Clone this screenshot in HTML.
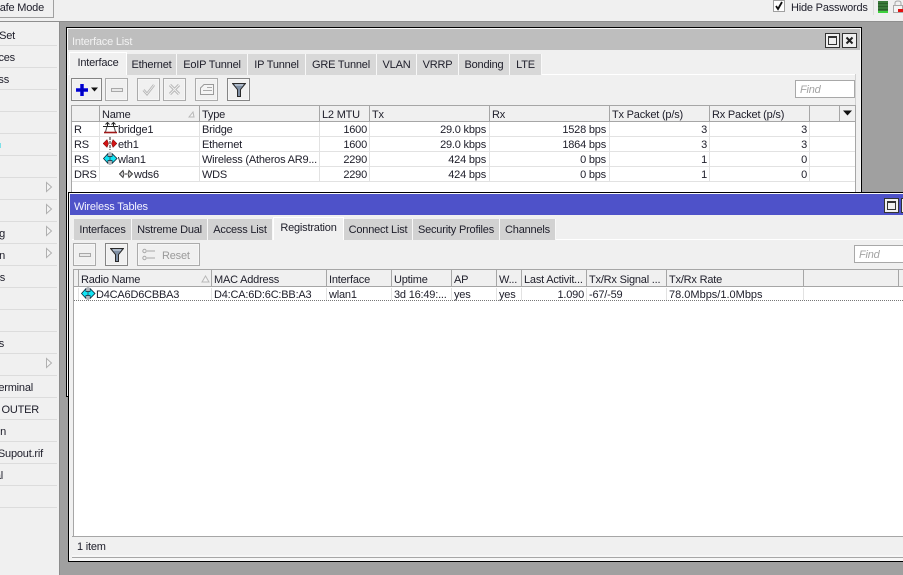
<!DOCTYPE html>
<html><head><meta charset="utf-8"><title>Interface List</title>
<style>
html,body{margin:0;padding:0}
body{width:903px;height:575px;overflow:hidden;position:relative;background:#a0a0a0;font:11px "Liberation Sans",Arial,sans-serif;letter-spacing:-.2px;color:#20202c}
div,svg{position:absolute;box-sizing:border-box}
.t{white-space:nowrap;line-height:16px;height:14px}
.r{text-align:right}
.sep{left:0;width:57px;height:1px;background:#dcdcdc}
.tab{background:#d8d8d8;border-right:1px solid #f8f8f8;height:21px;line-height:22px;text-align:center;white-space:nowrap}
.act{background:#f0f0f0;border:1px solid #fff;border-bottom:0;line-height:21px;text-align:center;white-space:nowrap;height:23px;z-index:2}
.btn{width:23px;height:23px;border:1px solid #ababab;background:#f0f0f0;box-shadow:inset 0 0 0 1px #f6f6f6}
.dark{border-color:#858585}
.hc{top:0;height:100%;width:1px;background:#a6a6a6}
.rc{width:1px;background:#e2e2e2}
.rl{height:1px;background:#e2e2e2}
</style></head><body>

<!-- top bar -->
<div style="left:0;top:0;width:903px;height:22px;background:#f0f0f0;border-bottom:1px solid #8e8e8e"></div>
<div style="left:-10px;top:-3px;width:64px;height:21px;border:1px solid #a0a0a0;background:#f0f0f0"></div>
<div class="t" style="right:859px;top:0">Safe Mode</div>
<div style="left:773px;top:0;width:12px;height:12px;background:#fff;border:1px solid #a0a0a0"></div>
<svg style="left:773px;top:0" width="12" height="12"><path d="M3 6l2 3 4-7" fill="none" stroke="#111" stroke-width="1.8"/></svg>
<div class="t" style="left:791px;top:0">Hide Passwords</div>
<div style="left:873px;top:0;width:1px;height:15px;background:#dcdcdc"></div>
<div style="left:878px;top:1px;width:10px;height:10px;background:repeating-linear-gradient(#3a7a3a 0 2px,#2a602a 2px 3px)"></div>
<div style="left:878px;top:11px;width:10px;height:2px;background:#3fd23f"></div>
<svg style="left:893px;top:0" width="10" height="14"><path d="M2 6V3Q2 1 5 1T8 3V6" fill="none" stroke="#a8a8a8"/><rect x=".5" y="5.5" width="9" height="7" fill="#f4f4f4" stroke="#a8a8a8"/><rect x="5" y="9" width="5" height="3" fill="#e01010"/></svg>

<!-- sidebar -->
<div style="left:0;top:22px;width:60px;height:553px;background:#f0f0f0;border-right:1px solid #8c8c8c"></div>
<div class="sep" style="top:45px"></div><div class="sep" style="top:67px"></div><div class="sep" style="top:89px"></div><div class="sep" style="top:111px"></div><div class="sep" style="top:133px"></div><div class="sep" style="top:155px"></div><div class="sep" style="top:177px"></div><div class="sep" style="top:199px"></div><div class="sep" style="top:221px"></div><div class="sep" style="top:243px"></div><div class="sep" style="top:265px"></div><div class="sep" style="top:287px"></div><div class="sep" style="top:309px"></div><div class="sep" style="top:331px"></div><div class="sep" style="top:353px"></div><div class="sep" style="top:375px"></div><div class="sep" style="top:397px"></div><div class="sep" style="top:419px"></div><div class="sep" style="top:441px"></div><div class="sep" style="top:463px"></div><div class="sep" style="top:485px"></div><div class="sep" style="top:507px"></div>
<div class="t r" style="right:888px;top:28px">Set</div>
<div class="t r" style="right:888px;top:50px">ces</div>
<div class="t r" style="right:894px;top:72px">ss</div>
<div class="t r" style="right:898px;top:226px">g</div>
<div class="t r" style="right:898px;top:248px">n</div>
<div class="t r" style="right:898px;top:270px">s</div>
<div class="t r" style="right:899px;top:336px">s</div>
<div class="t r" style="right:870px;top:380px">erminal</div>
<div class="t r" style="right:864px;top:402px">OUTER</div>
<div class="t r" style="right:897px;top:424px">n</div>
<div class="t r" style="right:860px;top:446px">Supout.rif</div>
<div class="t r" style="right:900px;top:468px">al</div>
<div style="left:0;top:143px;width:1px;height:5px;background:#7fe0e8"></div>
<svg style="left:45px;top:181px" width="8" height="12"><path d="M1.500 1.500V10.500L6.500 6Z" fill="#f4f4f4" stroke="#b0b0b0"/></svg>
<svg style="left:45px;top:203px" width="8" height="12"><path d="M1.500 1.500V10.500L6.500 6Z" fill="#f4f4f4" stroke="#b0b0b0"/></svg>
<svg style="left:45px;top:225px" width="8" height="12"><path d="M1.500 1.500V10.500L6.500 6Z" fill="#f4f4f4" stroke="#b0b0b0"/></svg>
<svg style="left:45px;top:247px" width="8" height="12"><path d="M1.500 1.500V10.500L6.500 6Z" fill="#f4f4f4" stroke="#b0b0b0"/></svg>
<svg style="left:45px;top:357px" width="8" height="12"><path d="M1.500 1.500V10.500L6.500 6Z" fill="#f4f4f4" stroke="#b0b0b0"/></svg>

<!-- Interface List window -->
<div style="left:66px;top:27px;width:796px;height:370px;background:#f0f0f0;border:1px solid #000;box-shadow:inset 0 0 0 1px #f8f8f8"></div>
<div style="left:68px;top:29px;width:792px;height:21px;background:#bebebe"></div>
<div class="t" style="left:72px;top:34px;color:#f2f2f2">Interface List</div>
<div style="left:825px;top:33px;width:15px;height:15px;background:#f0f0f0;border:1px solid #333"></div>
<div style="left:828px;top:36px;width:9px;height:9px;border:1px solid #333;border-top-width:2px"></div>
<div style="left:842px;top:33px;width:15px;height:15px;background:#f0f0f0;border:1px solid #333"></div>
<svg style="left:842px;top:33px" width="15" height="15"><path d="M4.500 4.500l6 6m0-6l-6 6" stroke="#222" stroke-width="2"/></svg>

<div style="left:68px;top:74px;width:788px;height:1px;background:#fff"></div>
<div style="left:855px;top:74px;width:1px;height:120px;background:#d0d0d0"></div>
<div class="act" style="left:69px;top:52px;width:58px">Interface</div>
<div class="tab" style="left:127px;top:54px;width:50px">Ethernet</div>
<div class="tab" style="left:177px;top:54px;width:71px">EoIP Tunnel</div>
<div class="tab" style="left:248px;top:54px;width:58px">IP Tunnel</div>
<div class="tab" style="left:306px;top:54px;width:71px">GRE Tunnel</div>
<div class="tab" style="left:377px;top:54px;width:40px">VLAN</div>
<div class="tab" style="left:417px;top:54px;width:42px">VRRP</div>
<div class="tab" style="left:459px;top:54px;width:51px">Bonding</div>
<div class="tab" style="left:510px;top:54px;width:32px">LTE</div>

<div class="btn dark" style="left:71px;top:78px;width:31px"></div>
<svg style="left:76px;top:83px" width="24" height="14"><path d="M6 1v12M0 7h12" stroke="#0000e0" stroke-width="3.500"/><path d="M1 7h10M6 2v10" stroke="#0000c0" stroke-width="2"/><path d="M15 4.500h7l-3.500 4z" fill="#111"/></svg>
<div class="btn" style="left:105px;top:78px"></div>
<div style="left:111px;top:88px;width:12px;height:4px;background:#e8e8e8;border:1px solid #a8a8a8"></div>
<div class="btn" style="left:137px;top:78px"></div>
<svg style="left:142px;top:83px" width="14" height="13"><path d="M1.500 7l3.500 4 7-9" fill="none" stroke="#b4b4b4" stroke-width="2.500"/><path d="M1.500 7l3.500 4 7-9" fill="none" stroke="#f0f0f0" stroke-width=".8"/></svg>
<div class="btn" style="left:163px;top:78px"></div>
<svg style="left:168px;top:83px" width="13" height="13"><path d="M2 2l9 9m0-9l-9 9" stroke="#b4b4b4" stroke-width="3"/><path d="M2 2l9 9m0-9l-9 9" stroke="#f0f0f0" stroke-width="1"/></svg>
<div class="btn" style="left:195px;top:78px"></div>
<svg style="left:200px;top:84px" width="14" height="11"><path d="M.5 10.500V4L4 .5H13.500V10.500Z" fill="#f4f4f4" stroke="#9a9a9a"/><path d="M7 3.500h5M3 6.500h9" stroke="#aaa"/></svg>
<div class="btn dark" style="left:227px;top:78px"></div>
<svg style="left:232px;top:83px" width="14" height="14"><path d="M.5 .5H13.500L8.500 6.500V13.500H5.500V6.500Z" fill="#7f8fa4" stroke="#2a2a2a"/><path d="M3 2h8" stroke="#d8e0ea"/></svg>
<div style="left:795px;top:80px;width:60px;height:18px;background:#fff;border:1px solid #a8a8a8"></div>
<div class="t" style="left:800px;top:82px;font-style:italic;color:#a4a4a4">Find</div>

<!-- table 1 -->
<div style="left:71px;top:105px;width:785px;height:17px;background:#f0f0f0;border:1px solid #a6a6a6">
<div class="hc" style="left:27px"></div><div class="hc" style="left:127px"></div><div class="hc" style="left:247px"></div><div class="hc" style="left:297px"></div><div class="hc" style="left:417px"></div><div class="hc" style="left:537px"></div><div class="hc" style="left:637px"></div><div class="hc" style="left:737px"></div><div class="hc" style="left:767px"></div>
</div>
<div style="left:71px;top:122px;width:1px;height:72px;background:#a6a6a6"></div>
<div style="left:72px;top:122px;width:783px;height:72px;background:#fff"></div>
<div style="left:855px;top:122px;width:1px;height:72px;background:#a6a6a6"></div>
<div class="rl" style="left:72px;top:136px;width:783px"></div><div class="rl" style="left:72px;top:151px;width:783px"></div><div class="rl" style="left:72px;top:166px;width:783px"></div><div class="rl" style="left:72px;top:181px;width:783px"></div>
<div class="rc" style="left:99px;top:122px;height:60px"></div><div class="rc" style="left:199px;top:122px;height:60px"></div><div class="rc" style="left:319px;top:122px;height:60px"></div><div class="rc" style="left:369px;top:122px;height:60px"></div><div class="rc" style="left:489px;top:122px;height:60px"></div><div class="rc" style="left:609px;top:122px;height:60px"></div><div class="rc" style="left:709px;top:122px;height:60px"></div><div class="rc" style="left:809px;top:122px;height:60px"></div>

<div class="t" style="left:102px;top:107px">Name</div>
<svg style="left:188px;top:110px" width="8" height="8"><path d="M1 7H6L5 2Z" fill="#f4f4f4" stroke="#b8b8b8"/></svg>
<div class="t" style="left:202px;top:107px">Type</div>
<div class="t" style="left:322px;top:107px">L2 MTU</div>
<div class="t" style="left:372px;top:107px">Tx</div>
<div class="t" style="left:492px;top:107px">Rx</div>
<div class="t" style="left:612px;top:107px">Tx Packet (p/s)</div>
<div class="t" style="left:712px;top:107px">Rx Packet (p/s)</div>
<svg style="left:842px;top:110px" width="11" height="7"><path d="M1 .5H10L5.500 5.500Z" fill="#111"/></svg>

<!-- rows -->
<div class="t" style="left:74px;top:122px">R</div>
<svg style="left:103px;top:122px" width="15" height="13"><path d="M0 4.500H15M4.500 1V4M10.500 1V4" stroke="#222" fill="none"/><path d="M4 4.500L2.500 10M11 4.500L12.500 10" stroke="#444" fill="none"/><path d="M2.500 2.500L4.500 .5 6.500 2.500M8.500 2.500L10.500 .5 12.500 2.500" stroke="#222" fill="none"/><path d="M1 10.500H14" stroke="#a01818" stroke-width="1.600"/></svg>
<div class="t" style="left:118px;top:122px">bridge1</div>
<div class="t" style="left:202px;top:122px">Bridge</div>
<div class="t r" style="left:320px;width:47px;top:122px">1600</div>
<div class="t r" style="left:370px;width:116px;top:122px">29.0 kbps</div>
<div class="t r" style="left:490px;width:116px;top:122px">1528 bps</div>
<div class="t r" style="left:610px;width:97px;top:122px">3</div>
<div class="t r" style="left:710px;width:97px;top:122px">3</div>

<div class="t" style="left:74px;top:137px">RS</div>
<svg style="left:103px;top:137px" width="15" height="13"><path d="M0 6.500L4 2.500 5.500 6.500 4 10.500ZM14 6.500L10 2.500 8.500 6.500 10 10.500Z" fill="#d01414" stroke="#601010" stroke-width=".5"/><path d="M7 0V13" stroke="#222" stroke-dasharray="3 1"/></svg>
<div class="t" style="left:118px;top:137px">eth1</div>
<div class="t" style="left:202px;top:137px">Ethernet</div>
<div class="t r" style="left:320px;width:47px;top:137px">1600</div>
<div class="t r" style="left:370px;width:116px;top:137px">29.0 kbps</div>
<div class="t r" style="left:490px;width:116px;top:137px">1864 bps</div>
<div class="t r" style="left:610px;width:97px;top:137px">3</div>
<div class="t r" style="left:710px;width:97px;top:137px">3</div>

<div class="t" style="left:74px;top:152px">RS</div>
<svg style="left:103px;top:152px" width="15" height="13"><path d="M.5 6.500L5 1.500V4.500H9V1.500L14 6.500 9 11.500V8.500H5V11.500Z" fill="#12e4f4" stroke="#123" stroke-width=".8"/><path d="M7 0V13" stroke="#234" stroke-width=".7"/></svg>
<div class="t" style="left:118px;top:152px">wlan1</div>
<div class="t" style="left:202px;top:152px">Wireless (Atheros AR9...</div>
<div class="t r" style="left:320px;width:47px;top:152px">2290</div>
<div class="t r" style="left:370px;width:116px;top:152px">424 bps</div>
<div class="t r" style="left:490px;width:116px;top:152px">0 bps</div>
<div class="t r" style="left:610px;width:97px;top:152px">1</div>
<div class="t r" style="left:710px;width:97px;top:152px">0</div>

<div class="t" style="left:74px;top:167px">DRS</div>
<svg style="left:119px;top:168px" width="15" height="12"><path d="M.5 6L4 2.500 5 6 4 9.500ZM13.500 6L10 2.500 9 6 10 9.500Z" fill="#d0d0d0" stroke="#333" stroke-width=".9"/><path d="M6 6H8" stroke="#333"/></svg>
<div class="t" style="left:134px;top:167px">wds6</div>
<div class="t" style="left:202px;top:167px">WDS</div>
<div class="t r" style="left:320px;width:47px;top:167px">2290</div>
<div class="t r" style="left:370px;width:116px;top:167px">424 bps</div>
<div class="t r" style="left:490px;width:116px;top:167px">0 bps</div>
<div class="t r" style="left:610px;width:97px;top:167px">1</div>
<div class="t r" style="left:710px;width:97px;top:167px">0</div>

<!-- Wireless Tables window -->
<div style="left:68px;top:192px;width:845px;height:370px;background:#f0f0f0;border:1px solid #000;box-shadow:inset 0 0 0 1px #f8f8f8"></div>
<div style="left:70px;top:194px;width:833px;height:21px;background:#4e52c9"></div>
<div class="t" style="left:74px;top:199px;color:#f4f4ff">Wireless Tables</div>
<div style="left:884px;top:198px;width:15px;height:15px;background:#f0f0f0;border:1px solid #333"></div>
<div style="left:887px;top:201px;width:9px;height:9px;border:1px solid #333;border-top-width:2px"></div>
<div style="left:901px;top:198px;width:5px;height:15px;background:#f0f0f0;border:1px solid #333"></div>

<div style="left:72px;top:239px;width:831px;height:1px;background:#fff"></div>
<div class="tab" style="left:74px;top:219px;width:58px;background:#d2d2d2">Interfaces</div>
<div class="tab" style="left:132px;top:219px;width:76px;background:#d2d2d2">Nstreme Dual</div>
<div class="tab" style="left:208px;top:219px;width:65px;background:#d2d2d2">Access List</div>
<div class="act" style="left:273px;top:217px;width:71px">Registration</div>
<div class="tab" style="left:344px;top:219px;width:69px;background:#d2d2d2">Connect List</div>
<div class="tab" style="left:413px;top:219px;width:87px;background:#d2d2d2">Security Profiles</div>
<div class="tab" style="left:500px;top:219px;width:56px;background:#d2d2d2">Channels</div>

<div class="btn" style="left:73px;top:243px"></div>
<div style="left:79px;top:253px;width:12px;height:4px;background:#e8e8e8;border:1px solid #a8a8a8"></div>
<div class="btn dark" style="left:105px;top:243px"></div>
<svg style="left:110px;top:248px" width="14" height="14"><path d="M.5 .5H13.500L8.500 6.500V13.500H5.500V6.500Z" fill="#7f8fa4" stroke="#2a2a2a"/><path d="M3 2h8" stroke="#d8e0ea"/></svg>
<div class="btn" style="left:137px;top:243px;width:63px"></div>
<svg style="left:142px;top:248px" width="14" height="13"><circle cx="2.500" cy="3" r="1.700" fill="none" stroke="#a8a8a8"/><circle cx="2.500" cy="10" r="1.700" fill="none" stroke="#a8a8a8"/><path d="M5 3H13M5 10H13" stroke="#a8a8a8"/></svg>
<div class="t" style="left:162px;top:248px;color:#9a9a9a">Reset</div>
<div style="left:854px;top:245px;width:60px;height:18px;background:#fff;border:1px solid #a8a8a8"></div>
<div class="t" style="left:859px;top:247px;font-style:italic;color:#a4a4a4">Find</div>

<!-- table 2 -->
<div style="left:73px;top:269px;width:840px;height:18px;background:#f0f0f0;border:1px solid #a6a6a6">
<div class="hc" style="left:4px"></div><div class="hc" style="left:137px"></div><div class="hc" style="left:252px"></div><div class="hc" style="left:317px"></div><div class="hc" style="left:377px"></div><div class="hc" style="left:422px"></div><div class="hc" style="left:447px"></div><div class="hc" style="left:512px"></div><div class="hc" style="left:592px"></div><div class="hc" style="left:729px"></div><div class="hc" style="left:824px"></div>
</div>
<div style="left:73px;top:287px;width:1px;height:249px;background:#a6a6a6"></div>
<div style="left:74px;top:287px;width:829px;height:249px;background:#fff"></div>
<div style="left:72px;top:536px;width:831px;height:1px;background:#a6a6a6"></div>
<div style="left:74px;top:300px;width:829px;height:1px;border-top:1px dotted #777"></div>
<div class="rc" style="left:78px;top:288px;height:12px"></div><div class="rc" style="left:211px;top:288px;height:12px"></div><div class="rc" style="left:326px;top:288px;height:12px"></div><div class="rc" style="left:391px;top:288px;height:12px"></div><div class="rc" style="left:451px;top:288px;height:12px"></div><div class="rc" style="left:496px;top:288px;height:12px"></div><div class="rc" style="left:521px;top:288px;height:12px"></div><div class="rc" style="left:586px;top:288px;height:12px"></div><div class="rc" style="left:666px;top:288px;height:12px"></div><div class="rc" style="left:803px;top:288px;height:12px"></div>

<div class="t" style="left:81px;top:272px">Radio Name</div>
<svg style="left:201px;top:274px" width="9" height="9"><path d="M1 8H8L4.500 2Z" fill="#f4f4f4" stroke="#b8b8b8"/></svg>
<div class="t" style="left:214px;top:272px">MAC Address</div>
<div class="t" style="left:329px;top:272px">Interface</div>
<div class="t" style="left:394px;top:272px">Uptime</div>
<div class="t" style="left:454px;top:272px">AP</div>
<div class="t" style="left:499px;top:272px">W...</div>
<div class="t" style="left:524px;top:272px">Last Activit...</div>
<div class="t" style="left:589px;top:272px">Tx/Rx Signal ...</div>
<div class="t" style="left:669px;top:272px">Tx/Rx Rate</div>

<svg style="left:81px;top:287px" width="15" height="13"><path d="M.5 6.500L5 1.500V4.500H9V1.500L14 6.500 9 11.500V8.500H5V11.500Z" fill="#12e4f4" stroke="#123" stroke-width=".8"/><path d="M7 0V13" stroke="#234" stroke-width=".7"/></svg>
<div class="t" style="left:96px;top:287px">D4CA6D6CBBA3</div>
<div class="t" style="left:214px;top:287px">D4:CA:6D:6C:BB:A3</div>
<div class="t" style="left:329px;top:287px">wlan1</div>
<div class="t" style="left:394px;top:287px">3d 16:49:...</div>
<div class="t" style="left:454px;top:287px">yes</div>
<div class="t" style="left:499px;top:287px">yes</div>
<div class="t r" style="left:522px;width:62px;top:287px">1.090</div>
<div class="t" style="left:589px;top:287px">-67/-59</div>
<div class="t" style="left:669px;top:287px;letter-spacing:0">78.0Mbps/1.0Mbps</div>

<div class="t" style="left:77px;top:539px">1 item</div>
<div style="left:72px;top:555px;width:831px;height:2px;background:#f6f6f6"></div>
<div style="left:72px;top:557px;width:831px;height:1px;background:#a6a6a6"></div>
<div style="left:72px;top:558px;width:831px;height:3px;background:#f6f6f6"></div>
</body></html>
